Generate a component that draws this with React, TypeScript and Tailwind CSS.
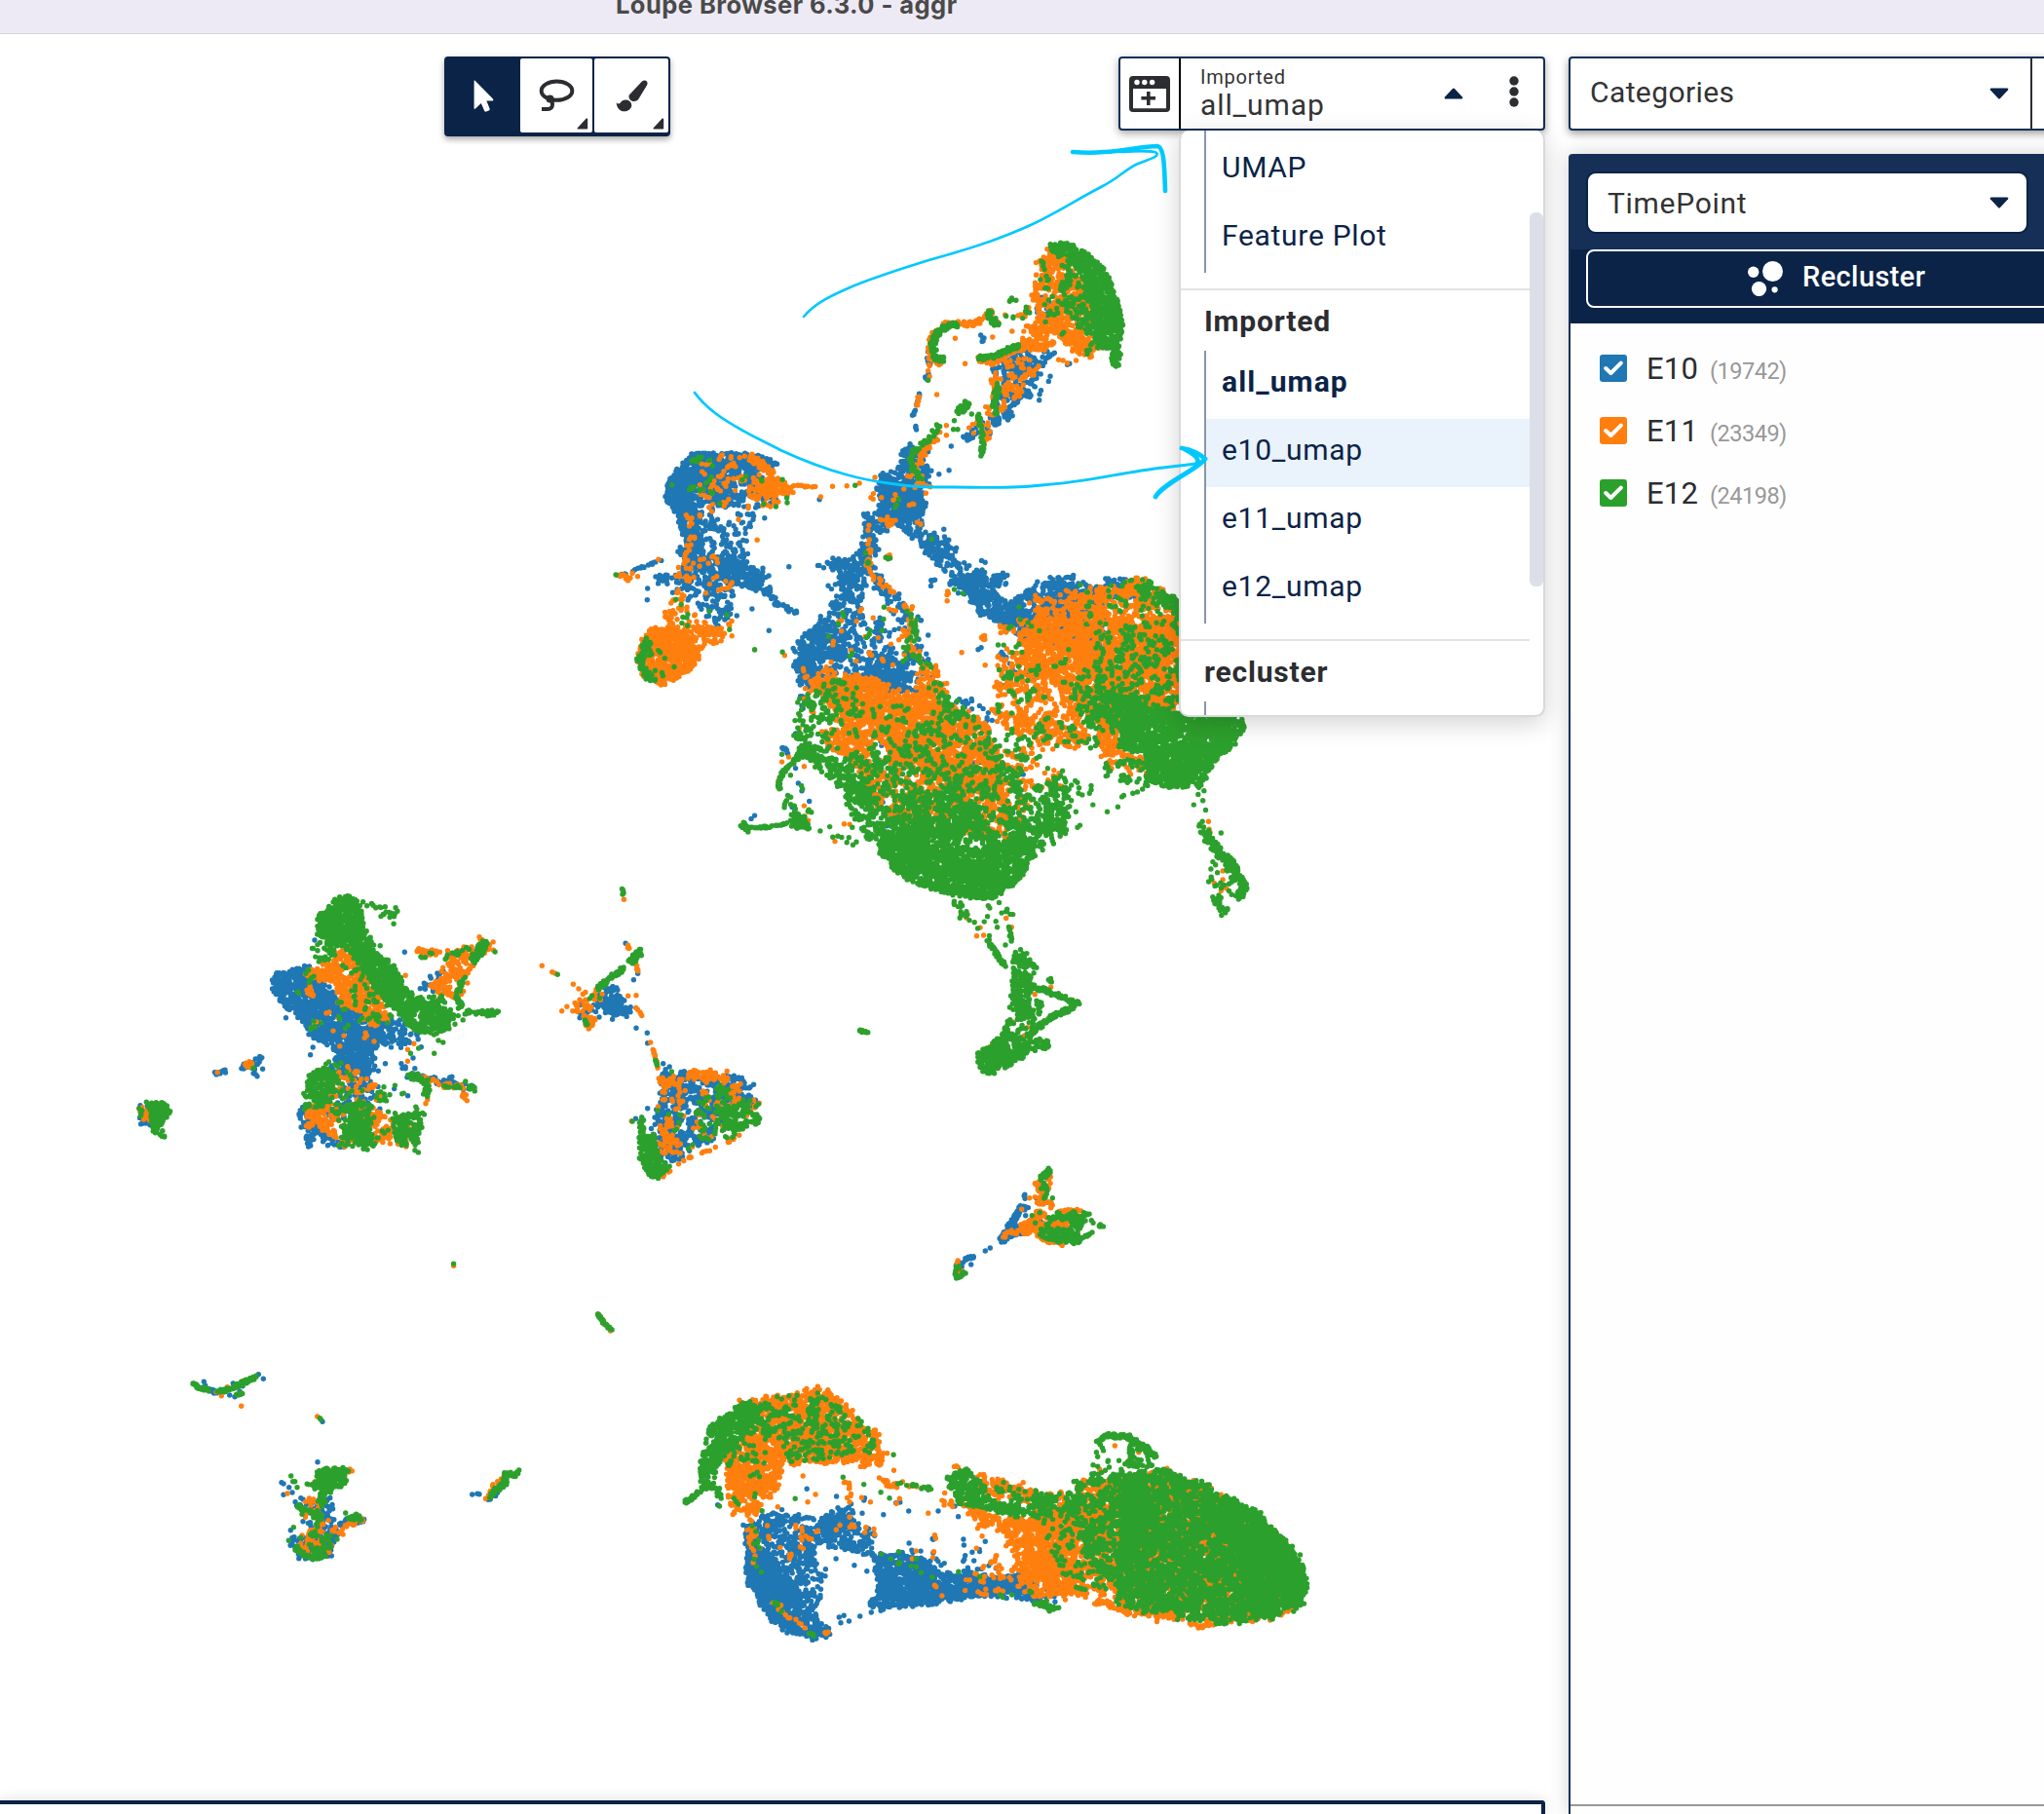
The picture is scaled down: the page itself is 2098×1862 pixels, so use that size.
import React from "react";

type Series = "b" | "o" | "g";
type Point = [number, number];
type Shape =
  | { kind: "area"; series: Series; cover: number; pts: string }
  | { kind: "trail"; series: Series; cover: number; spread: number; pts: string }
  | { kind: "dots"; series: Series; pts: string };
type Frame = { x: number; y: number; sx: number; sy: number; shapes: Shape[] };

const COLORS: Record<Series, string> = { b: "#1f77b4", o: "#ff7f0e", g: "#2ca02c" };
const DOT = 5.4;

const area = (series: Series, cover: number, pts: string): Shape => ({ kind: "area", series, cover, pts });
const trail = (series: Series, cover: number, spread: number, pts: string): Shape => ({ kind: "trail", series, cover, spread, pts });
const dots = (series: Series, pts: string): Shape => ({ kind: "dots", series, pts });

/* Cell clusters. Each frame has its own origin and units per pixel. */
const FRAMES: Frame[] = [
  {
    x: 600, y: 230, sx: 2.24, sy: 3,
    shapes: [
      area("g", 0.985, "1068,62 1105,54 1150,85 1195,135 1222,215 1236,290 1240,330 1228,440 1214,440 1210,385 1180,375 1168,300 1160,200 1120,115 1080,95"),
      area("o", 0.9, "1065,90 1110,100 1165,200 1170,300 1215,370 1165,385 1165,415 1140,400 1090,350 1060,400 1000,380 1010,330 1040,280 1030,220 1045,130"),
      area("g", 0.6, "1095,100 1165,150 1180,370 1160,415 1135,330 1100,290 1095,230"),
      area("g", 0.3, "1050,120 1100,100 1100,380 1040,300"),
      area("b", 0.6, "1035,220 1090,230 1080,300 1035,300"),
      area("b", 0.8, "985,390 1080,390 1065,430 1030,500 970,610 940,610 940,450"),
      area("b", 0.6, "930,590 980,590 920,660 880,670 890,620"),
      area("o", 0.6, "940,420 1050,400 1040,460 1010,510 960,570 920,600 900,640 920,560 940,470"),
      trail("o", 0.9, 7, "905,420 950,415 1000,380"),
      trail("g", 0.95, 5, "908,412 940,408 1000,372"),
      trail("g", 0.75, 6, "950,500 940,550 945,585"),
      trail("g", 0.8, 4, "905,590 915,650 915,715"),
      trail("o", 0.4, 9, "885,640 910,600 930,620 920,690"),
      area("b", 0.4, "1030,470 1080,475 1065,495 1035,540 970,600 980,560"),
      area("b", 0.4, "845,640 900,620 900,670 870,670"),
      dots("o", "1100,420 1110,428 1130,420 1090,418 875,430 852,352 938,348 983,330 810,525 832,620 832,650"),
      dots("b", "1115,430 1110,433 843,684 838,758 815,770 826,940 540,848 414,905"),
      trail("g", 0.95, 6, "828,415 806,415 800,370 815,325 856,308"),
      trail("o", 0.65, 6, "815,430 795,400 795,350 830,310 900,305 945,262"),
      trail("o", 0.3, 8, "900,305 950,290 1020,280 1030,260"),
      trail("g", 0.9, 8, "930,272 945,312"),
      trail("g", 0.6, 3, "975,245 985,230 992,240"),
      trail("g", 0.6, 5, "1015,258 1025,285"),
      trail("g", 0.3, 2, "960,285 1015,288"),
      trail("b", 0.4, 3, "905,338 918,350 905,380"),
      trail("b", 0.5, 3, "790,390 792,440 785,480"),
      trail("o", 0.3, 3, "790,400 792,440 795,480"),
      dots("g", "790,481 798,970 850,605 848,632 858,632 890,585"),
      trail("b", 0.7, 2, "772,520 755,590"),
      trail("o", 0.6, 2, "768,530 762,580"),
      trail("b", 0.6, 3, "765,618 760,650"),
      area("b", 0.88, "735,685 780,690 790,780 785,850 770,920 790,960 760,960 700,930 650,960 630,900 680,880 665,820 680,780 720,750"),
      area("b", 0.95, "680,780 780,800 770,900 690,910"),
      trail("o", 0.6, 9, "820,640 790,680 760,760 790,820"),
      trail("g", 0.7, 6, "812,625 790,665 755,700 750,740 775,795"),
      area("o", 0.15, "660,780 780,780 770,940 650,950"),
      trail("g", 0.5, 4, "722,845 714,870"),
      trail("g", 0.9, 8, "882,548 862,580"),
      area("b", 0.86, "750,920 790,960 830,970 855,1030 900,1060 980,1085 950,1120 950,1150 900,1180 840,1110 860,1080 810,1050"),
      area("b", 0.35, "765,960 860,1000 940,1060 860,1110 770,1110 840,1070 770,1010"),
      area("b", 0.9, "860,1090 910,1080 950,1130 970,1170 1030,1200 1030,1260 960,1240 900,1190"),
      area("b", 0.78, "1030,1110 1110,1085 1150,1100 1200,1100 1260,1090 1250,1140 1190,1150 1190,1300 1000,1280 960,1190"),
      area("b", 0.85, "650,940 680,960 665,1060 720,1150 745,1200 730,1200 680,1140 655,1080 600,1140 585,1080 560,1050 570,1020 600,1040 635,1010"),
      area("b", 0.65, "600,1060 650,1060 645,1200 600,1240 590,1330 500,1360 480,1300 520,1250 550,1200 560,1120"),
      area("b", 0.5, "540,1230 770,1200 765,1340 720,1420 500,1420 490,1300"),
      area("b", 0.8, "485,1290 540,1230 560,1290 620,1330 540,1350 500,1420 488,1400"),
      area("b", 0.7, "670,1340 720,1330 740,1400 660,1480"),
      trail("b", 0.3, 4, "530,1055 560,1055"),
      trail("o", 0.35, 7, "650,930 655,1080 730,1150 745,1190"),
      trail("g", 0.2, 6, "640,1000 655,1080"),
      trail("o", 0.4, 11, "755,1190 745,1300 800,1380"),
      trail("g", 0.5, 9, "750,1190 760,1260 740,1300 790,1370"),
      trail("o", 0.8, 5, "692,1015 704,1030"),
      trail("g", 0.9, 3, "695,1028 702,1030"),
      area("o", 0.1, "560,1170 730,1160 740,1350 500,1360"),
      area("g", 0.07, "600,1160 700,1160 740,1350 540,1350"),
      trail("o", 0.4, 4, "835,1125 838,1165"),
      trail("o", 0.9, 5, "910,1265 922,1275"),
      dots("o", "867,1319 921,1358 460,1328 397,973 543,840 632,798 603,806 570,808 354,910"),
      dots("b", "905,1310 912,1304 790,1266 424,1252 470,1055 410,1060 826,940 145,1122 144,1157 350,1206 385,1185"),
      dots("g", "391,1311 455,1318 622,805 850,1125 870,1137"),

      area("b", 0.98, "252,703 400,708 445,738 425,755 330,765 300,800 275,840 265,900 265,990 235,990 212,900 187,850 190,795 215,750"),
      area("b", 0.88, "270,750 400,770 440,850 430,870 330,870 270,870"),
      area("o", 0.3, "250,740 290,750 300,710 400,720 440,850 420,870 300,870 280,920 250,890"),
      trail("o", 0.9, 8, "385,718 410,745 432,765"),
      area("o", 0.95, "395,790 440,783 480,820 460,840 400,825"),
      area("o", 0.6, "370,810 470,825 445,868 395,865"),
      area("g", 0.06, "240,710 400,720 460,850 300,860 190,810"),
      trail("g", 0.7, 4, "245,735 270,715"),
      dots("g", "455,787 465,843 466,858 440,870 412,862 311,860 201,803"),
      trail("o", 0.8, 2, "480,805 530,809"),
      area("b", 0.6, "265,880 390,890 370,1000 385,1060 330,1060 300,1000 270,950"),
      area("b", 0.95, "225,950 265,960 280,1020 350,1030 400,1075 420,1110 400,1120 330,1110 280,1070 220,1090"),
      trail("b", 0.65, 6, "410,1120 440,1165 470,1185 490,1200"),
      area("b", 0.5, "390,1040 450,1070 430,1130 370,1110"),
      trail("o", 0.35, 7, "235,900 255,950 230,1010 240,1070"),
      area("o", 0.28, "225,1030 300,1030 380,1100 300,1150 220,1100"),
      trail("b", 0.6, 3, "72,1085 120,1065 180,1035"),
      trail("o", 0.8, 6, "80,1085 100,1090"),
      dots("g", "72,1080"),
      dots("o", "170,1033 110,1075 122,1085"),
      area("b", 0.65, "160,1085 240,1060 340,1110 330,1230 290,1240 270,1190 200,1130"),
      area("o", 0.6, "205,1140 260,1140 250,1220 350,1230 340,1270 270,1290 190,1240 170,1240"),
      area("o", 0.7, "160,1240 270,1240 340,1250 340,1270 260,1320 200,1290 150,1260"),
      area("o", 0.98, "155,1240 200,1240 230,1290 265,1310 262,1350 215,1400 180,1422 135,1398 120,1350 132,1280"),
      trail("g", 0.7, 10, "145,1285 128,1340 135,1385 160,1405"),
      area("g", 0.3, "140,1280 200,1330 210,1370 160,1410"),
      area("g", 0.12, "180,1130 350,1200 340,1260 180,1260 200,1200"),
    ],
  },
  {
    x: 750, y: 560, sx: 2.851, sy: 2.8,
    shapes: [
      area("o", 0.88, "1000,130 1100,120 1190,93 1310,150 1316,200 1210,190 1110,200 1000,220"),
      area("o", 0.95, "900,220 1316,200 1316,450 1260,480 1180,480 1100,560 1060,500 990,480 960,400 880,380 850,290"),
      area("o", 0.6, "870,130 1010,130 1050,240 840,280 780,230 880,200"),
      area("o", 0.65, "790,260 900,380 1000,480 1060,560 1000,590 900,560 880,540 790,530 760,480 780,330"),
      area("o", 0.6, "800,380 860,380 850,430 800,430"),
      area("b", 0.14, "780,280 900,300 900,430 780,450"),
      area("g", 0.1, "780,170 1000,200 1000,450 780,450"),
      area("g", 0.18, "1000,110 1180,90 1316,200 1000,250"),
      area("g", 0.52, "1060,250 1316,200 1316,500 1060,530 990,470 1000,390 1060,350"),
      area("g", 0.98, "1220,460 1316,480 1496,488 1508,520 1478,570 1438,600 1398,650 1380,688 1300,698 1235,690 1210,600 1130,580 1150,520"),
      area("g", 0.8, "1050,440 1130,400 1220,440 1220,560 1100,530 1040,490"),
      area("g", 0.6, "1080,625 1240,610 1230,690 1180,690 1100,660"),
      area("o", 0.9, "1060,540 1150,560 1150,610 1100,610"),
      area("o", 0.5, "1100,600 1240,600 1230,660 1120,640"),
      area("g", 0.93, "1170,95 1220,105 1314,160 1314,200 1280,180 1200,130"),
      area("b", 0.6, "890,100 1000,92 1060,130 1180,100 1190,150 1060,160 1060,260 900,260"),

      area("o", 0.95, "240,390 340,370 430,385 500,430 560,400 600,440 700,490 750,510 790,640 760,700 640,680 480,600 430,560 330,540 290,460"),
      area("o", 0.85, "260,520 420,560 400,640 300,600"),
      area("o", 0.8, "570,330 605,345 625,410 600,450 550,400"),
      area("o", 0.75, "360,620 620,600 800,700 830,830 640,830 430,760"),
      area("o", 0.4, "210,330 300,340 300,460 220,480"),
      area("b", 0.4, "200,300 600,300 600,430 420,430 200,400"),
      area("b", 0.7, "420,350 540,360 520,430 440,430"),
      area("b", 0.7, "195,330 240,350 220,400 215,460 200,470"),
      area("b", 0.05, "300,500 860,500 850,800 420,800"),
      area("g", 0.5, "205,470 250,420 310,380 330,450 300,600 210,580"),
      area("g", 0.33, "280,370 450,450 620,430 700,480 760,560 760,640 480,560 300,540"),
      area("g", 0.65, "560,400 610,390 690,490 650,490"),
      area("g", 0.62, "320,600 520,560 640,620 760,640 850,640 850,820 450,800 330,680"),
      area("g", 0.65, "480,720 620,700 740,740 740,830 430,850 470,780"),
      area("g", 0.98, "430,850 500,820 560,830 600,880 740,870 880,860 885,890 850,955 790,1005 740,1018 680,1010 580,985 520,965 460,920 435,880"),
      area("g", 0.85, "420,800 500,770 830,820 880,870 600,890 430,870"),
      area("g", 0.9, "195,590 230,570 310,620 355,680 410,700 440,840 400,835 360,775 325,700 270,655"),
      area("g", 0.9, "830,830 860,785 920,770 1005,765 970,825 920,860 870,910"),
      area("g", 0.7, "850,700 960,670 1000,740 990,780 850,800"),
      area("o", 0.55, "780,640 900,680 880,740 840,800 740,780"),
      area("o", 0.5, "780,580 910,580 900,640 800,640"),
      area("g", 0.45, "740,540 900,530 880,620 760,640"),
      area("g", 0.35, "880,500 1080,540 1050,590 980,570 900,570"),
      area("o", 0.4, "780,500 980,500 1040,560 900,580"),
      area("g", 0.4, "930,640 1030,660 1000,740 900,700"),
      area("o", 0.4, "910,650 980,650 970,700 900,700"),
      area("g", 0.25, "770,330 880,430 880,520 760,500"),
      dots("g", "1055,690 1055,702 1050,712 1060,745 1102,765 1133,751 1145,722 1150,718 1177,712 1190,708 1220,690 1205,700 1015,810 1022,804 1010,765 1368,715 1355,745 1382,733 1390,760 1385,705 1370,695 1435,826"),
      area("b", 0.35, "630,440 760,450 790,510 700,490"),

      trail("g", 0.7, 10, "1378,800 1390,835 1415,860"),
      trail("g", 0.8, 11, "1410,850 1430,890 1445,900"),
      trail("g", 0.96, 8, "1448,890 1475,930 1503,980 1488,1010"),
      area("g", 0.4, "1395,900 1460,900 1490,1000 1450,1050 1425,1040 1400,980 1410,930"),
      trail("g", 0.85, 8, "1420,1015 1435,1055 1450,1045"),
      dots("o", "1440,935 1415,970 1440,960 1450,985 1435,992 1398,793 1400,815 1403,825"),

      trail("g", 0.9, 4, "140,700 150,655 200,605"),
      trail("b", 0.85, 5, "150,572 168,595"),
      trail("g", 0.95, 6, "35,803 58,818"),
      trail("g", 0.9, 2, "58,812 120,808"),
      trail("g", 0.8, 3, "130,805 165,800 230,812"),
      area("g", 0.95, "168,766 203,764 236,813 183,802"),
      area("g", 0.25, "150,690 235,690 235,770 150,750"),
      area("g", 0.4, "280,820 420,800 440,860 350,860"),
      area("g", 0.5, "200,430 250,430 240,600 190,590"),
      dots("o", "332,800 348,801 305,850 150,622 170,608 215,748 226,765 227,790 140,675 200,525 215,635"),
      dots("b", "70,776 60,785 198,683 190,540 190,640 230,735 180,752 208,705"),
      dots("g", "70,299 207,690 210,700 150,600 175,660 290,808 262,820"),

      area("g", 0.65, "605,1015 660,1020 720,1080 690,1075"),
      area("g", 0.22, "640,1020 790,1030 830,1060 770,1080 720,1080"),
      dots("g", "758,1042 793,1056 826,1060 776,1080 780,1097 723,1100 757,1121 804,1148"),
      dots("o", "690,1070 720,1122 740,1120 730,1098 806,1071 822,1097 937,1269 760,1440"),
      trail("g", 0.9, 4, "750,1132 775,1170 805,1210"),
      trail("g", 0.9, 2, "812,1092 822,1135"),
      area("g", 0.96, "832,1155 870,1165 895,1215 882,1245 875,1350 845,1340 822,1310 822,1230"),
      trail("g", 0.8, 5, "880,1265 980,1300 1000,1310"),
      trail("g", 0.96, 5, "1022,1308 985,1335 930,1360 870,1410"),
      area("g", 0.65, "820,1300 920,1310 910,1350 870,1410 790,1400 820,1350"),
      area("g", 0.98, "720,1452 760,1440 800,1385 860,1420 910,1415 945,1438 870,1458 830,1490 760,1522 730,1510"),
      trail("g", 0.9, 3, "930,1245 945,1255"),
      dots("g", "895,1213 905,1340"),
      dots("o", "890,1290 868,1385 860,1408 828,1370"),
      trail("g", 0.95, 3, "376,1395 402,1403"),
    ],
  },
  {
    x: 130, y: 900, sx: 2.306, sy: 3,
    shapes: [
      area("g", 0.985, "450,120 482,84 500,62 520,54 540,62 556,90 561,150 576,190 598,240 634,270 655,330 690,372 760,412 767,470 733,486 682,476 640,420 590,350 555,280 520,220 480,215 450,175"),
      trail("g", 0.5, 4, "560,82 600,92"),
      area("g", 0.85, "603,86 650,98 645,125 605,115"),
      dots("g", "632,145 600,212 577,187"),
      dots("o", "590,95 660,304 665,532 680,514 665,568"),
      dots("b", "658,232 445,195 441,525 435,548 377,434 690,500 697,524 678,558 660,590"),
      area("b", 0.97, "345,300 380,288 430,272 470,320 500,380 550,420 610,440 595,515 580,540 500,530 430,490 415,440 370,400 343,350"),
      area("b", 0.75, "580,430 660,440 660,510 600,515"),
      area("b", 0.93, "485,520 582,520 575,600 530,615 500,600"),
      area("o", 0.94, "410,300 450,285 490,235 530,228 560,290 600,350 620,450 590,470 540,410 500,390 500,330 440,315"),
      trail("o", 0.8, 8, "430,345 440,370"),
      area("g", 0.28, "500,260 600,300 640,450 560,450 520,320"),
      area("g", 0.65, "440,190 500,210 490,250 440,280"),
      trail("g", 0.5, 7, "425,290 440,310"),
      area("g", 0.09, "400,300 620,300 640,480 430,480"),
      area("o", 0.12, "430,400 600,400 620,520 480,520"),
      area("g", 0.9, "445,588 485,588 492,660 465,720 415,720 420,660"),
      area("b", 0.93, "408,705 440,705 470,790 520,830 515,850 490,822 470,825 455,790 440,825 428,822"),
      area("b", 0.65, "480,560 580,560 580,740 470,740"),
      area("o", 0.45, "480,580 580,600 600,760 480,760"),
      area("g", 0.42, "470,560 520,590 580,680 580,800 500,800 480,700"),
      area("o", 0.85, "425,700 470,700 500,790 535,815 515,840 470,790 428,768"),
      area("g", 0.88, "525,700 570,700 572,780 592,830 560,838 505,822"),
      area("g", 0.9, "638,730 703,730 690,820 655,830 630,785"),
      area("o", 0.8, "570,725 640,735 680,760 660,825 580,825"),
      area("g", 0.25, "500,700 700,720 690,830 560,830"),
      area("g", 0.18, "580,590 640,600 690,720 580,720"),
      area("b", 0.14, "570,570 660,570 690,720 580,720"),
      area("o", 0.8, "755,240 800,218 845,195 862,215 822,260 802,340 780,370 745,378 725,340"),
      area("b", 0.75, "700,330 770,270 795,255 750,350 695,355"),
      trail("g", 0.95, 9, "848,205 820,255"),
      trail("g", 0.5, 7, "755,250 810,220"),
      trail("g", 0.9, 4, "797,310 780,370 800,410"),
      trail("g", 0.85, 4, "800,420 850,418"),
      trail("g", 0.97, 7, "850,420 872,418"),
      area("g", 0.65, "740,400 820,415 790,450 770,470"),
      area("g", 0.6, "690,360 760,370 740,410 700,400"),
      trail("o", 0.85, 6, "685,226 735,235"),
      trail("g", 0.6, 7, "698,255 715,235"),
      dots("g", "872,231 738,504 749,510 728,544 672,544 691,528"),
      dots("o", "868,226"),
      area("b", 0.5, "645,430 700,480 650,520 600,510"),
      trail("g", 0.8, 8, "670,608 720,640"),
      trail("b", 0.6, 7, "665,605 720,625 830,655"),
      trail("o", 0.65, 6, "700,620 750,640 800,650"),
      trail("g", 0.5, 7, "740,640 800,650 830,655"),
      trail("o", 0.7, 7, "790,660 805,682"),
      trail("g", 0.8, 7, "715,640 708,680"),
      dots("b", "765,618 770,616 650,575 660,585 682,590"),
      dots("o", "708,698 712,686"),
      dots("g", "802,630"),
      trail("b", 0.8, 4, "205,607 235,597"),
      dots("o", "215,602"),
      area("b", 0.98, "255,596 285,570 324,550 305,592"),
      trail("o", 0.9, 6, "283,583 297,568"),
      dots("b", "322,592 300,605 309,614 305,608"),
      dots("g", "300,589"),
      area("b", 0.88, "27,702 60,692 60,770 42,778 26,730"),
      trail("o", 0.8, 7, "37,712 47,748"),
      area("g", 0.98, "42,692 90,695 105,725 82,762 89,800 75,810 50,755 60,730"),
      area("g", 0.5, "30,702 60,692 50,730 28,730"),
      trail("g", 0.95, 2, "1174,35 1175,55"),
      dots("o", "1177,70 983,274 1007,293 1014,297 1057,331 1070,345 1030,413 1042,400 1056,413 1187,367 1206,365 1240,510"),
      dots("g", "1020,301"),
      dots("b", "1181,205 1210,298 1200,317 1206,466 1232,481 1233,512"),
      trail("o", 0.9, 3, "1183,208 1188,218"),
      trail("g", 0.98, 8, "1218,230 1195,260"),
      trail("g", 0.9, 5, "1180,280 1150,305 1112,348"),
      trail("o", 0.6, 2, "1205,262 1210,298"),
      area("b", 0.95, "1155,325 1162,370 1196,400 1183,422 1150,435 1140,400 1100,395 1130,350"),
      area("b", 0.7, "1070,390 1150,400 1150,425 1080,425"),
      area("o", 0.75, "1065,378 1110,345 1137,360 1120,400 1068,418"),
      trail("o", 0.6, 2, "1204,398 1220,430"),
      trail("o", 0.85, 7, "1078,435 1105,445 1090,460"),
      trail("g", 0.8, 5, "1084,445 1092,460"),
      trail("g", 0.3, 8, "1090,370 1115,375"),
      trail("o", 0.9, 1, "1246,530 1258,590"),
      trail("g", 0.9, 1, "1250,560 1256,580"),
      area("b", 0.75, "1262,600 1310,598 1420,608 1440,700 1400,790 1340,848 1290,885 1268,850 1253,750 1258,680"),
      area("b", 0.93, "1410,615 1440,610 1478,650 1488,700 1470,712 1440,675"),
      area("b", 0.65, "1235,740 1310,750 1300,880 1260,880"),
      area("o", 0.9, "1320,592 1428,602 1420,632 1340,625"),
      area("o", 0.8, "1262,615 1305,612 1300,642 1268,662"),
      area("o", 0.25, "1262,600 1420,620 1440,700 1400,790 1340,850 1290,880 1260,850"),
      area("o", 0.45, "1420,620 1470,640 1503,715 1490,770 1430,700"),
      area("g", 0.4, "1280,740 1370,660 1430,620 1440,810 1330,840"),
      area("g", 0.88, "1410,720 1450,698 1503,708 1496,752 1440,806 1405,765"),
      area("g", 0.98, "1213,790 1252,795 1260,870 1288,890 1255,932 1235,918 1215,870"),
      area("o", 0.7, "1265,740 1310,760 1300,850 1265,860"),
      trail("g", 0.9, 6, "1218,745 1220,785"),
      trail("o", 0.4, 3, "1270,925 1320,870 1400,830 1460,790"),
      dots("b", "1233,713 1205,745 1270,575 1285,585"),
      dots("o", "1195,752 774,1198 1258,708"),
      dots("g", "1197,753 1257,720 774,1192 1290,600"),
      trail("o", 0.6, 2, "1116,1348 1148,1400"),
      trail("g", 0.98, 2, "1114,1344 1130,1375 1149,1398"),
    ],
  },
  {
    x: 680, y: 1400, sx: 2.24, sy: 3,
    shapes: [
      area("g", 0.97, "86,310 108,195 153,142 195,115 235,130 205,190 170,240 145,280 125,320 108,385 90,385"),
      area("o", 0.93, "180,115 290,92 375,80 432,130 462,190 495,220 502,315 400,306 280,310 262,390 222,435 212,465 162,458 150,400 145,280 200,200"),
      area("g", 0.57, "170,115 380,90 430,132 488,210 480,270 440,280 290,310 280,230 170,230"),
      area("g", 0.45, "140,230 240,230 230,320 150,310"),
      area("g", 0.12, "150,310 260,310 220,440 160,440"),
      trail("g", 0.96, 4, "50,428 85,395"),
      trail("g", 0.6, 10, "115,370 135,410"),
      dots("b", "332,385 245,407 127,434 400,408 566,453 508,464 546,426 537,428 567,552"),
      dots("g", "531,280 415,349 463,371 305,415 131,438 543,578 229,452"),
      area("b", 0.88, "190,500 240,460 300,470 310,530 380,460 430,435 450,500 485,520 480,600 430,570 370,560 340,610 300,640 310,740 360,760 370,845 350,855 270,815 220,740 195,670"),
      area("b", 0.96, "192,560 260,600 300,700 290,780 350,850 280,815 222,740 195,670"),
      area("b", 0.35, "240,450 330,440 360,470 460,420 480,500 300,540"),
      area("b", 0.985, "480,580 600,598 640,645 760,650 860,660 860,728 740,714 640,735 500,757 470,748 495,700 490,640"),
      area("b", 0.75, "310,590 370,620 355,790 310,740"),
      area("b", 0.85, "350,795 400,815 370,845"),
      area("b", 0.45, "480,560 600,590 800,635 640,660"),
      dots("b", "375,632 374,653 441,620 470,638 399,600 454,777 417,775 406,780 429,792 410,797 480,765 502,760"),
      area("o", 0.11, "190,480 440,460 490,520 300,600 240,620"),
      trail("o", 0.35, 13, "205,500 205,620"),
      trail("g", 0.15, 12, "205,500 225,660"),
      trail("o", 0.25, 6, "240,710 300,790 380,830"),
      trail("g", 0.4, 4, "250,720 272,760"),
      trail("g", 0.6, 3, "330,820 350,840"),
      trail("o", 0.2, 8, "430,500 490,520"),
      trail("g", 0.2, 7, "500,580 560,620 600,640"),
      area("o", 0.18, "600,640 860,640 850,725 620,700"),
      area("g", 0.07, "600,640 860,640 850,725 620,700"),
      trail("o", 0.8, 2, "670,316 682,318"),
      area("g", 0.96, "652,345 700,324 735,365 755,415 830,440 810,468 740,448 680,430 658,380"),
      area("o", 0.9, "700,335 760,350 870,395 950,410 850,430 750,400"),
      area("o", 0.88, "690,430 800,480 860,470 950,540 960,700 850,718 805,640 810,560 780,510 730,500"),
      area("g", 0.82, "790,430 870,400 950,405 960,480 860,470 810,475"),
      area("g", 0.25, "740,340 870,400 860,430 760,410"),
      area("g", 0.38, "860,460 980,470 1020,720 940,700 910,600"),
      area("o", 0.85, "860,430 1000,430 1050,700 900,720 850,600"),
      area("b", 0.45, "760,630 920,640 900,725 780,720"),
      area("o", 0.9, "950,370 1160,335 1250,390 1370,470 1460,600 1450,740 1280,800 1060,770 1040,690 990,600"),
      area("g", 0.82, "948,370 1000,340 1110,332 1120,480 1080,690 1050,760 1040,690 980,600 950,480"),
      area("g", 0.94, "1060,340 1160,333 1250,385 1370,455 1382,490 1426,540 1470,612 1481,680 1468,738 1410,776 1280,800 1190,776 1070,756 1050,680"),
      area("g", 0.93, "1260,440 1370,457 1420,530 1468,600 1478,680 1463,735 1400,760 1340,640"),
      trail("g", 0.6, 7, "1150,325 1190,360 1240,370 1260,390"),
      trail("o", 0.75, 8, "990,730 1060,750 1140,775"),
      trail("o", 0.85, 5, "1210,795 1240,812 1262,800"),
      trail("o", 0.35, 4, "1280,795 1400,785 1465,740"),
      trail("g", 0.95, 5, "1000,242 1020,220 1070,224 1110,256 1138,288"),
      area("g", 0.5, "1000,240 1020,230 1020,300 1000,300"),
      area("g", 0.6, "1060,230 1085,240 1130,300 1110,330 1070,330"),
      area("g", 0.4, "1000,290 1060,300 1080,340 970,360"),
      dots("o", "1040,252 1095,272 1005,325 1160,322 1070,300 611,460 430,425 478,425 458,412 352,402 265,440 334,425 545,415 538,430 532,328 323,345"),
      area("g", 0.97, "850,737 880,728 917,750 885,762"),
      trail("o", 0.8, 8, "505,358 535,375"),
      trail("g", 0.65, 4, "540,370 615,385"),
      trail("o", 0.35, 4, "550,365 590,385"),
      trail("o", 0.5, 4, "405,358 432,370 428,420"),
      area("o", 0.4, "610,400 680,410 710,460 650,470"),
      trail("o", 0.45, 5, "450,320 500,300 515,265"),
      trail("o", 0.25, 2, "625,505 630,550 620,600"),
      trail("b", 0.15, 3, "622,500 620,600"),
      area("b", 0.12, "690,490 740,540 720,610 700,600"),
      area("o", 0.3, "710,620 800,590 800,640 720,660"),
      dots("o", "768,590 765,600 735,530 790,560 795,550 722,568 583,576 574,600"),
      dots("b", "634,453 672,438 680,470 692,540 693,558 742,547 712,580"),
      dots("g", "522,413 502,395 583,600"),
    ],
  },
  {
    x: 180, y: 1380, sx: 3, sy: 3,
    shapes: [
      trail("g", 0.98, 3, "54,120 75,135 105,140"),
      trail("b", 0.9, 3, "100,138 130,150"),
      trail("g", 0.98, 4, "130,145 165,140 205,120 246,101"),
      trail("g", 0.8, 3, "190,157 210,148"),
      dots("b", "88,115 92,127 256,92 271,106 167,156 183,161 178,120 198,145 207,128"),
      dots("o", "142,158 203,190 160,131 126,146 210,112"),
      dots("b", "453,238"), dots("o", "437,222"), dots("g", "445,227 448,231"),
      dots("b", "438,362 327,425 333,429 333,463 350,440 360,456 914,462 930,460 936,461 393,545 355,572"),
      dots("g", "356,405 362,422 368,422 375,440 390,523 364,563 524,519 478,456"),
      dots("o", "345,459 537,384"),
      area("o", 0.6, "410,440 530,380 525,445 480,445"),
      area("g", 0.99, "437,390 470,380 500,384 536,378 524,438 460,448 404,442 406,426 430,425"),
      area("b", 0.7, "375,440 392,450 390,490 370,490"),
      area("b", 0.7, "375,485 480,470 485,565 415,585 395,510"),
      area("o", 0.5, "400,480 480,480 495,550 430,575"),
      trail("g", 0.92, 5, "375,498 400,510 440,530"),
      trail("g", 0.6, 11, "460,445 445,500 430,550"),
      area("b", 0.88, "345,588 370,595 500,565 485,650 425,666 390,658 362,632"),
      area("o", 0.6, "385,590 430,550 512,582 480,650 400,655"),
      area("g", 0.62, "395,590 470,570 485,640 460,663 400,655"),
      trail("g", 0.85, 5, "370,625 405,655 460,657"),
      dots("g", "349,604 386,595 498,600"),
      trail("b", 0.7, 6, "495,570 520,545 585,541"),
      trail("o", 0.6, 5, "540,545 578,538 508,565"),
      trail("g", 0.85, 6, "535,540 555,530 572,538"),
      trail("o", 0.6, 6, "960,480 980,440 1020,400"),
      trail("b", 0.5, 4, "960,480 1000,450"),
      trail("g", 0.92, 5, "960,478 990,445 1015,430 1018,395 1040,405 1055,390"),
    ],
  },
  {
    x: 960, y: 1180, sx: 3, sy: 3,
    shapes: [
      area("b", 0.99, "193,280 238,205 265,195 250,235 292,240 288,264 240,264 206,290"),
      trail("b", 0.9, 5, "245,215 258,180 285,178"),
      trail("b", 0.8, 3, "276,138 280,155"),
      dots("b", "278,203 318,152 312,150 154,312 169,303 110,354 325,222"),
      trail("b", 0.9, 4, "85,345 115,328"),
      trail("b", 0.7, 7, "70,350 95,365"),
      trail("o", 0.7, 5, "72,340 68,375 90,378"),
      trail("g", 0.9, 4, "72,358 62,380 68,395 95,376"),
      area("o", 0.96, "253,242 300,205 315,180 338,190 348,225 418,218 412,252 300,258 260,255"),
      trail("o", 0.9, 4, "212,268 235,250 250,262"),
      trail("o", 0.75, 7, "310,95 325,110 330,160"),
      trail("o", 0.85, 3, "310,166 360,162 357,180"),
      trail("o", 0.7, 4, "350,80 348,115"),
      trail("o", 0.7, 3, "380,192 420,188 450,188"),
      trail("o", 0.9, 4, "312,262 350,282 395,290"),
      trail("o", 0.8, 3, "270,262 300,250"),
      dots("o", "290,149 307,146 266,184"),
      trail("g", 0.97, 5, "318,90 340,78 352,62"),
      trail("g", 0.75, 4, "330,105 345,120 340,150"),
      dots("g", "326,120 361,149 298,203 322,194 308,226 349,209"),
      area("g", 0.99, "358,215 380,188 395,200 430,190 478,195 475,210 452,225 440,255 446,275 432,290 380,288 325,270 324,245 380,245 420,240 415,218"),
      trail("g", 0.9, 4, "345,235 350,225"),
      trail("g", 0.95, 2, "440,285 450,272 475,262"),
      dots("g", "483,255 481,218 486,226 470,265"),
      trail("g", 0.97, 3, "502,234 520,237"),
    ],
  },
];

const SPECKLE: string[] = buildSpeckle();

function seeded(seed: number) {
  let s = seed;
  return () => {
    s = (s + 0x6d2b79f5) | 0;
    let t = Math.imul(s ^ (s >>> 15), 1 | s);
    t = (t + Math.imul(t ^ (t >>> 7), 61 | t)) ^ t;
    return ((t ^ (t >>> 14)) >>> 0) / 4294967296;
  };
}

function inside(x: number, y: number, poly: Point[]) {
  let hit = false;
  for (let i = 0, j = poly.length - 1; i < poly.length; j = i++) {
    const [xi, yi] = poly[i];
    const [xj, yj] = poly[j];
    if (yi > y !== yj > y && x < ((xj - xi) * (y - yi)) / (yj - yi) + xi) hit = !hit;
  }
  return hit;
}

/* Scatters the cells and returns one path per series, in paint order. */
function buildSpeckle(): string[] {
  const rand = seeded(20231);
  const out: Record<Series, string[]> = { b: [], o: [], g: [] };
  const put = (s: Series, x: number, y: number) => out[s].push(`M${x.toFixed(1)} ${y.toFixed(1)}h0`);
  const density = (cover: number) => -Math.log(1 - cover) / 21;

  for (const frame of FRAMES) {
    for (const shape of frame.shapes) {
      const pts = shape.pts.split(" ").map((p): Point => {
        const [x, y] = p.split(",").map(Number);
        return [frame.x + x / frame.sx, frame.y + y / frame.sy];
      });
      if (shape.kind === "dots") {
        pts.forEach(([x, y]) => put(shape.series, x, y));
      } else if (shape.kind === "area") {
        const xs = pts.map((p) => p[0]);
        const ys = pts.map((p) => p[1]);
        const x0 = Math.min(...xs);
        const y0 = Math.min(...ys);
        const w = Math.max(...xs) - x0;
        const h = Math.max(...ys) - y0;
        const soft = shape.cover > 0.95 ? 2 : shape.cover > 0.5 ? 5 : 10;
        const clump = shape.cover > 0.95 ? 0 : 0.5;
        const n = Math.round((w * h * density(shape.cover)) / (1 + clump * 0.6));
        for (let i = 0; i < n; i++) {
          const x = x0 + rand() * w;
          const y = y0 + rand() * h;
          if (!inside(x, y, pts)) continue;
          const px = x + (rand() - 0.5) * soft;
          const py = y + (rand() - 0.5) * soft;
          put(shape.series, px, py);
          if (rand() < clump) put(shape.series, px + (rand() - 0.5) * 8, py + (rand() - 0.5) * 8);
        }
      } else {
        for (let i = 1; i < pts.length; i++) {
          const [ax, ay] = pts[i - 1];
          const [bx, by] = pts[i];
          const len = Math.hypot(bx - ax, by - ay);
          const n = Math.ceil(len * (shape.spread + 5) * density(shape.cover) * 1.15);
          for (let k = 0; k < n; k++) {
            const t = rand();
            const a = rand() * Math.PI * 2;
            const r = (Math.sqrt(rand()) * shape.spread) / 2;
            put(shape.series, ax + (bx - ax) * t + Math.cos(a) * r, ay + (by - ay) * t + Math.sin(a) * r);
          }
        }
      }
    }
  }
  return [out.b.join(""), out.o.join(""), out.g.join("")];
}

function ScatterPlot() {
  const order: Series[] = ["b", "o", "g"];
  return (
    <svg className="absolute left-0 top-0" width="1587" height="1862" viewBox="0 0 1587 1862" fill="none">
      {order.map((s, i) => (
        <path key={s} d={SPECKLE[i]} stroke={COLORS[s]} strokeWidth={DOT} strokeLinecap="round" />
      ))}
    </svg>
  );
}

function Annotations() {
  return (
    <svg className="pointer-events-none absolute left-0 top-0 z-30" width="1587" height="700" viewBox="0 0 1587 700" fill="none" stroke="#00c8ff" strokeLinecap="round" strokeLinejoin="round">
      <path d="M825 325C836 312 850 305 868 297C895 285 925 276 957 266C990 257 1030 244 1060 230C1085 218 1105 205 1130 192C1147 184 1156 173 1168 168C1180 163 1187 162 1188 158C1186 154 1170 155 1150 156" strokeWidth="2.6" />
      <path d="M1101 156C1112 157 1124 157 1133 156C1155 155 1172 150 1188 150C1194 151 1195 163 1196 196" strokeWidth="4.6" />
      <path d="M713 403C718 410 725 417 734 424C755 440 776 449 801 462C825 473 846 481 868 487C882 491 897 494 912 496C935 500 955 500 979 500C1020 501 1045 501 1069 498C1115 495 1150 485 1194 480L1228 476" strokeWidth="2.8" />
      <path d="M1213 460C1224 462 1232 466 1237 471C1229 482 1194 496 1186 510M1216 461C1226 466 1231 471 1229 475" strokeWidth="4.8" />
    </svg>
  );
}

function Caret({ up = false }: { up?: boolean }) {
  return (
    <svg width="20" height="12" viewBox="0 0 20 12" fill="#0b2347">
      {up ? <path d="M9 1Q10 0 11 1L19 9.5Q20 11.5 18 11.5H2Q0 11.5 1 9.5Z" /> : <path d="M9 11Q10 12 11 11L19 2.5Q20 .5 18 .5H2Q0 .5 1 2.5Z" />}
    </svg>
  );
}

function CornerMark() {
  return (
    <svg className="absolute bottom-[3px] right-[4px]" width="12" height="12" viewBox="0 0 12 12" fill="#2b2d31">
      <path d="M9.5 .8Q11.2 0 11.2 1.6V10.8Q11.2 11.6 10.4 11.6H1.4Q-.2 11.4 1 10Z" />
    </svg>
  );
}

function Toolbar() {
  return (
    <div className="flex h-[82px] w-[232px] gap-[2px] rounded-[4px] border-2 border-b-4 border-[#0b2347] bg-[#0b2347] shadow-[0_3px_6px_rgba(0,0,0,0.35)]">
      <button className="flex w-[74px] items-center justify-center">
        <svg className="ml-[2px]" width="21" height="33" viewBox="0 0 21 33" fill="#fff">
          <path d="M.6 1Q.6 0 1.6 .8L20 19.5Q21 21.6 19 21.6H13.4L16.6 29.6Q17 31 15.8 31.5L13 32.6Q11.8 33 11.2 31.8L7.8 24L2 29.6Q.6 30.6 .6 29Z" />
        </svg>
      </button>
      <button className="relative flex w-[74px] items-center justify-center rounded-[2px] bg-white">
        <svg width="38" height="34" viewBox="0 0 38 34" fill="none" stroke="#2b2d31">
          <ellipse cx="19.5" cy="12.2" rx="15.8" ry="9.6" strokeWidth="4" />
          <circle cx="12.5" cy="20.5" r="4" fill="#2b2d31" stroke="none" />
          <path d="M13.5 21C17 28 14 31 10 31H4" strokeWidth="4" />
        </svg>
        <CornerMark />
      </button>
      <button className="relative flex flex-1 items-center justify-center rounded-[2px] bg-white">
        <svg className="mt-[1px]" width="33" height="33" viewBox="0 0 33 33" fill="#2b2d31">
          <path d="M27 1.5C30 -.8 34 1.4 32 5.5L23.5 19.5C19.5 25 11.500 20.500 14 15.200Z" />
          <path d="M.6 23.400C3 25.500 4.500 24.200 5.500 22.500C8 19 16.500 20 16.300 26.500C15.500 33.500 2 36 .6 23.400Z" />
        </svg>
        <CornerMark />
      </button>
    </div>
  );
}

function MenuItem({ label, active = false, bold = false }: { label: string; active?: boolean; bold?: boolean }) {
  return (
    <li className={`flex h-[70px] items-center pb-[7px] pl-[16px] text-[30px] text-[#0b2347] ${active ? "bg-[#eaf2fb]" : ""} ${bold ? "font-bold tracking-[1.1px]" : "tracking-[0.7px]"}`}>
      {label}
    </li>
  );
}

function MenuHeading({ label }: { label: string }) {
  return <div className="flex h-[62px] items-center pl-[24px] text-[30px] font-bold tracking-[0.8px] text-[#2b2d31]">{label}</div>;
}

function ProjectionMenu() {
  return (
    <div className="absolute left-[60px] top-[74px] z-20 h-[602px] w-[376px] overflow-hidden rounded-[10px] border-2 border-t-0 border-[#d9d9d9] bg-white shadow-[0_6px_26px_rgba(0,0,0,0.18)]">
      <div className="-mt-px mr-[14px]">
        <ul className="ml-[24px] border-l-2 border-[#8a94ab] pt-[7px]">
          <MenuItem label="UMAP" />
          <MenuItem label="Feature Plot" />
        </ul>
        <div className="mt-[16px] h-[2px] bg-[#e2e2e2]" />
        <MenuHeading label="Imported" />
        <ul className="ml-[24px] border-l-2 border-[#8a94ab]">
          <MenuItem label="all_umap" bold />
          <MenuItem label="e10_umap" active />
          <MenuItem label="e11_umap" />
          <MenuItem label="e12_umap" />
        </ul>
        <div className="mt-[16px] h-[2px] bg-[#e2e2e2]" />
        <MenuHeading label="recluster" />
        <div className="ml-[24px] h-[20px] border-l-2 border-[#8a94ab]" />
      </div>
      <div className="absolute right-0 top-[84px] h-[384px] w-[14px] rounded-[6px] bg-[#dcdfe8]" />
    </div>
  );
}

function ProjectionSelect() {
  return (
    <div className="relative flex h-[76px] w-[438px] rounded-[4px] border-2 border-[#152f56] bg-white shadow-[0_3px_8px_rgba(0,0,0,0.35)]">
      <div className="z-30 flex w-[62px] items-center justify-center border-r-2 border-black pr-[1px]">
        <svg width="42" height="37" viewBox="0 0 42 37" fill="#2b2d31">
          <path fillRule="evenodd" d="M4 0H38Q42 0 42 4V33Q42 37 38 37H4Q0 37 0 33V4Q0 0 4 0ZM4 13V33.200H38V13Z" />
          <path d="M18 16H21.600V21H27V24.600H21.600V30H18V24.600H12.400V21H18Z" />
          <g fill="#fff">
            <circle cx="8" cy="6.500" r="2.700" />
            <circle cx="15.800" cy="6.500" r="2.700" />
            <circle cx="23.600" cy="6.500" r="2.700" />
          </g>
        </svg>
      </div>
      <div className="relative z-30 flex flex-1 items-center">
        <div className="flex-1 pb-[2px] pl-[20px] text-[#333]">
          <div className="text-[20px] leading-[24px] tracking-[0.8px]">Imported</div>
          <div className="pt-px text-[30px] leading-[32px] tracking-[0.9px]">all_umap</div>
        </div>
        <Caret up />
        <svg className="-mt-[4px] ml-[47px] mr-[25px]" width="10" height="32" viewBox="0 0 10 32" fill="#2b2d31">
          <circle cx="5" cy="5" r="4.700" />
          <circle cx="5" cy="16" r="4.700" />
          <circle cx="5" cy="27" r="4.700" />
        </svg>
      </div>
      <ProjectionMenu />
    </div>
  );
}

function ClusterRow({ name, count, color }: { name: string; count: number; color: string }) {
  return (
    <label className="flex h-[64px] items-center">
      <span className={`flex h-[28px] w-[28px] items-center justify-center rounded-[3px] ${color}`}>
        <svg width="20" height="16" viewBox="0 0 20 16" fill="none" stroke="#fff" strokeWidth="4" strokeLinecap="round" strokeLinejoin="round">
          <path d="M2.200 8L7.400 13L17.800 2.600" />
        </svg>
      </span>
      <span className="ml-[20px] w-[65px] pt-[2px] text-[31px] tracking-[0.2px] text-[#2b2d31]">{name}</span>
      <span className="pt-[7px] text-[23.500px] tracking-[-0.5px] text-[#999]">({count})</span>
    </label>
  );
}

function Sidebar() {
  return (
    <aside className="flex w-[488px] shrink-0 flex-col overflow-visible pt-[23px]">
      <div className="flex h-[76px] w-[520px] rounded-[4px] border-2 border-[#152f56] bg-white shadow-[0_3px_8px_rgba(0,0,0,0.4)]">
        <div className="flex w-[474px] items-center justify-between border-r-2 border-[#2b2d31] pl-[20px] pr-[22px]">
          <span className="pb-[3px] text-[30px] tracking-[0.4px] text-[#333]">Categories</span>
          <Caret />
        </div>
      </div>
      <div className="mt-[24px] flex w-[520px] flex-1 flex-col rounded-tl-[4px] border-l-2 border-[#152f56] bg-[#fefefe] shadow-[0_0_20px_rgba(0,0,0,0.18)]">
        <div className="h-[98px] rounded-tl-[2px] bg-[#152f56] pl-[16px] pt-[18px]">
          <div className="flex h-[64px] w-[454px] items-center justify-between rounded-[10px] border-2 border-[#0b2347] bg-white pl-[20px] pr-[18px]">
            <span className="text-[30px] tracking-[0.700px] text-[#333]">TimePoint</span>
            <Caret />
          </div>
        </div>
        <div className="h-[76px] bg-[#0b2347] pl-[16px]">
          <button className="flex h-[60px] w-[516px] items-center rounded-[8px] border-2 border-white pl-[164px] text-white">
            <svg width="36" height="36" viewBox="0 0 36 36" fill="#fff">
              <circle cx="5.700" cy="11.300" r="5.700" />
              <circle cx="25.500" cy="10.500" r="10.500" />
              <circle cx="11.500" cy="28.500" r="7.600" />
              <circle cx="27.600" cy="29.300" r="3.100" />
            </svg>
            <span className="ml-[20px] pb-[3px] text-[29px] font-medium tracking-[0.400px]">Recluster</span>
          </button>
        </div>
        <div className="flex-1 pl-[30px] pt-[14px]">
          <ClusterRow name="E10" count={19742} color="bg-[#1f77b4]" />
          <ClusterRow name="E11" count={23349} color="bg-[#ff7f0e]" />
          <ClusterRow name="E12" count={24198} color="bg-[#2ca02c]" />
        </div>
        <div className="h-[10px] border-t-2 border-[#999]" />
      </div>
    </aside>
  );
}

export default function App() {
  return (
    <div className="relative flex h-[1862px] w-[2098px] flex-col overflow-hidden bg-white font-[Roboto,sans-serif]">
      <header className="z-10 flex h-[35px] shrink-0 items-end border-b border-[#d5d3d6] bg-[#eeeaf5] pb-[13px] pl-[632px]">
        <h1 className="whitespace-nowrap font-[Inter,sans-serif] text-[25.500px] font-bold leading-[32px] tracking-[0.450px] text-[#4a4a4a]">Loupe Browser 6.3.0 - aggr</h1>
      </header>
      <ScatterPlot />
      <div className="flex min-h-0 flex-1">
        <main className="flex w-[1610px] flex-col justify-between">
          <div className="z-10 flex justify-between pl-[456px] pr-[24px] pt-[23px]">
            <Toolbar />
            <ProjectionSelect />
          </div>
          <div className="z-10 h-[14px] w-[1586px] rounded-tr-[4px] border-r-4 border-t-4 border-[#0b2347] bg-white shadow-[0_0_14px_rgba(0,0,0,0.15)]" />
        </main>
        <Sidebar />
      </div>
      <Annotations />
    </div>
  );
}
